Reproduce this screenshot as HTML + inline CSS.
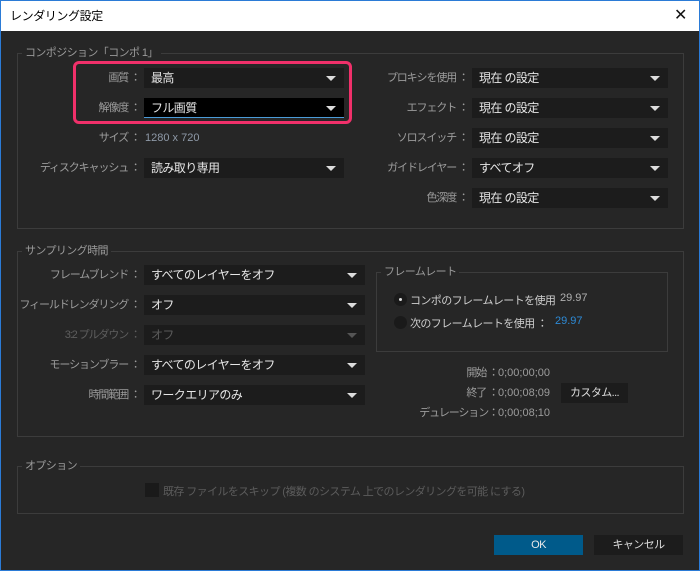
<!DOCTYPE html>
<html><head><meta charset="utf-8"><style>
*{margin:0;padding:0;box-sizing:border-box}
body{width:700px;height:571px;overflow:hidden;background:#262626;font-family:"Liberation Sans","Noto Sans CJK JP",sans-serif;font-size:11px;letter-spacing:-0.6px;position:relative}
.win{position:absolute;left:0;top:0;width:700px;height:571px;border:1px solid #2b7bd6;border-top:none}
.title{position:absolute;left:0;top:0;width:700px;height:31px;background:#fff;border:1px solid #2b7bd6;border-bottom:none;color:#000;font-size:12px;line-height:30px;padding-left:9px;letter-spacing:-0.4px}
.x{position:absolute;right:12px;top:0;font-size:16px;line-height:30px;color:#111}
.a{position:absolute;white-space:nowrap}
.grp{position:absolute;border:1px solid #3c3c3c}
.gl{position:absolute;background:#262626;color:#9a9a9a;padding:0 3px;white-space:nowrap;line-height:14px}
.lb{position:absolute;color:#9c9c9c;text-align:right;line-height:20px;white-space:nowrap;letter-spacing:-1.1px}
.n{letter-spacing:0;font-size:11px}
.dd{position:absolute;height:20px;background:#1c1c1c;color:#e6e6e6;line-height:20px;padding-left:7px;white-space:nowrap;font-size:12px}
.dd:after{content:"";position:absolute;right:8px;top:8px;border-left:5px solid transparent;border-right:5px solid transparent;border-top:5px solid #dcdcdc}
.dis{color:#5a5a5a}.dis:after{border-top-color:#555}
</style></head><body>
<div class="win"></div>
<div class="title">レンダリング設定<span class="x">✕</span></div>

<div class="grp" style="left:17px;top:53px;width:667px;height:176px"></div>
<div class="gl" style="left:22px;top:46px">コンポジション「コンポ 1」</div>

<div class="lb" style="left:60px;width:80px;top:68px">画質 ：</div>
<div class="dd" style="left:144px;top:68px;width:200px">最高</div>
<div class="lb" style="left:60px;width:80px;top:98px">解像度 ：</div>
<div class="dd" style="left:144px;top:98px;width:200px;background:#000;border-bottom:1px solid #4a9bd8">フル画質</div>
<div style="position:absolute;left:73px;top:61px;width:279px;height:63px;border:3px solid #f0306a;border-radius:6px"></div>
<div class="lb" style="left:60px;width:80px;top:128px">サイズ ：</div>
<div class="a n" style="left:145px;top:128px;line-height:20px;color:#8f9aa8">1280 x 720</div>
<div class="lb" style="left:20px;width:120px;top:158px">ディスクキャッシュ ：</div>
<div class="dd" style="left:144px;top:158px;width:200px">読み取り専用</div>

<div class="lb" style="left:350px;width:118px;top:68px">プロキシを使用 ：</div>
<div class="dd" style="left:472px;top:68px;width:196px">現在 の設定</div>
<div class="lb" style="left:350px;width:118px;top:98px">エフェクト ：</div>
<div class="dd" style="left:472px;top:98px;width:196px">現在 の設定</div>
<div class="lb" style="left:350px;width:118px;top:128px">ソロスイッチ ：</div>
<div class="dd" style="left:472px;top:128px;width:196px">現在 の設定</div>
<div class="lb" style="left:350px;width:118px;top:158px">ガイドレイヤー ：</div>
<div class="dd" style="left:472px;top:158px;width:196px">すべてオフ</div>
<div class="lb" style="left:350px;width:118px;top:188px">色深度 ：</div>
<div class="dd" style="left:472px;top:188px;width:196px">現在 の設定</div>

<div class="grp" style="left:17px;top:251px;width:667px;height:186px"></div>
<div class="gl" style="left:22px;top:244px">サンプリング時間</div>
<div class="lb" style="left:10px;width:130px;top:265px">フレームブレンド ：</div>
<div class="dd" style="left:144px;top:265px;width:221px">すべてのレイヤーをオフ</div>
<div class="lb" style="left:10px;width:130px;top:295px">フィールドレンダリング ：</div>
<div class="dd" style="left:144px;top:295px;width:221px">オフ</div>
<div class="lb" style="left:10px;width:130px;top:325px;color:#5e5e5e">3:2 プルダウン ：</div>
<div class="dd dis" style="left:144px;top:325px;width:221px">オフ</div>
<div class="lb" style="left:10px;width:130px;top:355px">モーションブラー ：</div>
<div class="dd" style="left:144px;top:355px;width:221px">すべてのレイヤーをオフ</div>
<div class="lb" style="left:10px;width:130px;top:385px">時間範囲 ：</div>
<div class="dd" style="left:144px;top:385px;width:221px">ワークエリアのみ</div>

<div class="grp" style="left:376px;top:272px;width:292px;height:80px"></div>
<div class="gl" style="left:381px;top:265px">フレームレート</div>
<div style="position:absolute;left:394px;top:293px;width:13px;height:13px;border-radius:50%;background:#1a1a1a"></div>
<div style="position:absolute;left:399px;top:298px;width:3px;height:3px;border-radius:50%;background:#ddd"></div>
<div class="a" style="left:410px;top:292px;color:#cfcfcf">コンポのフレームレートを使用</div>
<div class="a n" style="left:560px;top:292px;color:#b0b0b0">29.97</div>
<div style="position:absolute;left:394px;top:316px;width:13px;height:13px;border-radius:50%;background:#1a1a1a"></div>
<div class="a" style="left:410px;top:315px;color:#cfcfcf">次のフレームレートを使用 ：</div>
<div class="a n" style="left:555px;top:315px;color:#2d8ad6">29.97</div>

<div class="lb" style="left:400px;width:150px;top:363px">開始 ：<span class="n">0;00;00;00</span></div>
<div class="lb" style="left:400px;width:150px;top:383px">終了 ：<span class="n">0;00;08;09</span></div>
<div class="lb" style="left:400px;width:150px;top:403px">デュレーション：<span class="n">0;00;08;10</span></div>
<div class="a" style="left:561px;top:383px;width:67px;height:20px;background:#1c1c1c;color:#ddd;line-height:20px;text-align:center">カスタム...</div>

<div class="grp" style="left:17px;top:466px;width:667px;height:48px"></div>
<div class="gl" style="left:22px;top:459px">オプション</div>
<div style="position:absolute;left:145px;top:483px;width:14px;height:14px;background:#1a1a1a"></div>
<div class="a" style="left:163px;top:483px;color:#5c5c5c">既存 ファイルをスキップ (複数 のシステム 上でのレンダリングを可能 にする)</div>

<div class="a" style="left:494px;top:535px;width:89px;height:20px;background:#005a8a;color:#e8e8e8;line-height:20px;text-align:center">OK</div>
<div class="a" style="left:594px;top:535px;width:89px;height:20px;background:#1c1c1c;color:#ddd;line-height:20px;text-align:center">キャンセル</div>
</body></html>
